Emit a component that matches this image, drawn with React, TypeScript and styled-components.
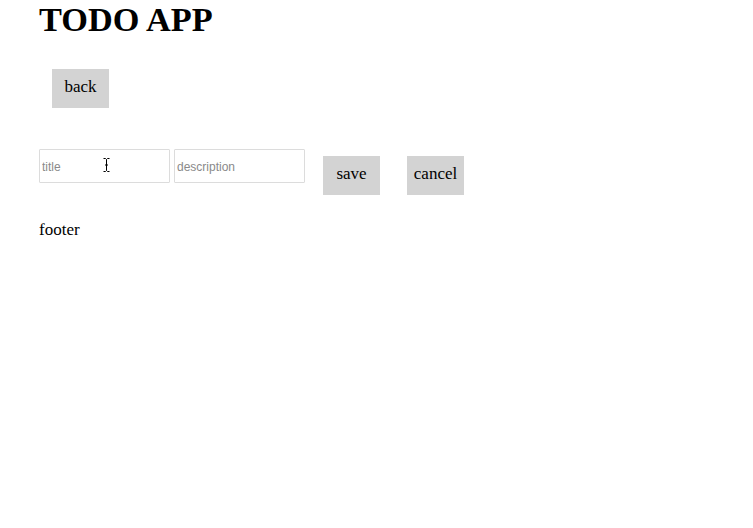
import React from "react";
import styled, { createGlobalStyle } from "styled-components";

const Global = createGlobalStyle`
  html, body { margin: 0; padding: 0; background: #fff; }
  body { font-family: "Liberation Serif", "Times New Roman", serif; color: #000; }
`;

const Page = styled.div`
  padding: 0 0 0 39px;
  position: relative;
  min-height: 528px;
  box-sizing: border-box;
`;

const Title = styled.h1`
  margin: 0;
  padding-top: 3px;
  font-size: 34.3px;
  line-height: 33px;
  font-weight: bold;
`;

const BackRow = styled.div`
  margin-top: 33px;
  padding-left: 13px;
  display: flex;
`;

const Button = styled.button`
  width: 57px;
  height: 39px;
  border: none;
  background: #d3d3d3;
  font-family: "Liberation Serif", "Times New Roman", serif;
  font-size: 17px;
  color: #000;
  padding: 0 0 4px 0;
  margin: 0;
  cursor: pointer;
`;

const FormRow = styled.div`
  margin-top: 41px;
  display: flex;
  align-items: flex-start;
`;

const Input = styled.input`
  width: 131px;
  height: 34px;
  box-sizing: border-box;
  border: 1px solid #dcdcdc;
  border-radius: 1px;
  padding: 2px 2px 0 2px;
  margin: 0 4px 0 0;
  font-family: "Liberation Sans", Arial, sans-serif;
  font-size: 12px;
  outline: none;
  &::placeholder { color: #8a8a8a; }
`;

const SaveWrap = styled.div`
  margin-left: 14px;
  margin-top: 7px;
  display: flex;
  gap: 27px;
`;

const Footer = styled.div`
  margin-top: 25px;
  font-size: 17px;
  line-height: 20px;
`;

const Cursor = styled.svg`
  position: absolute;
  left: 102px;
  top: 157px;
`;

export default function App() {
  return (
    <>
      <Global />
      <Page>
        <Title>TODO APP</Title>
        <BackRow>
          <Button>back</Button>
        </BackRow>
        <FormRow>
          <Input placeholder="title" />
          <Input placeholder="description" />
          <SaveWrap>
            <Button>save</Button>
            <Button>cancel</Button>
          </SaveWrap>
        </FormRow>
        <Footer>footer</Footer>
        <Cursor width="9" height="16" viewBox="0 0 9 16">
          <path d="M1.5 1.5h2l1 1 1-1h2M4.5 2.5v11M1.5 14.5h2l1-1 1 1h2M3 8h3" stroke="#fff" strokeWidth="2.5" fill="none" />
          <path d="M1.5 1.5h2l1 1 1-1h2M4.5 2.5v11M1.5 14.5h2l1-1 1 1h2M3 8h3" stroke="#000" strokeWidth="1" fill="none" />
        </Cursor>
      </Page>
    </>
  );
}
